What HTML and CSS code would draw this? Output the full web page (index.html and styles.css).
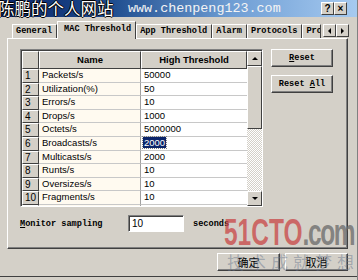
FILE: index.html
```html
<!DOCTYPE html>
<html lang="zh">
<head>
    <meta charset="UTF-8">
    <title>MAC Threshold</title>
    <link rel="stylesheet" href="styles.css">
</head>
<body>
    <div class="dialog">
        <div class="titlebar">
            <span class="title-cn">陈鹏的个人网站</span>
            <span class="title-url">www.chenpeng123.com</span>
            <span class="tb-btn">?</span>
            <span class="tb-btn close">×</span>
        </div>

        <div class="tabs">
            <span class="tab">General</span>
            <span class="tab active">MAC Threshold</span>
            <span class="tab">App Threshold</span>
            <span class="tab">Alarm</span>
            <span class="tab">Protocols</span>
            <span class="tab cut">Pro</span>
            <span class="tab-arrows">
                <span class="arrow-btn"><i class="tri left"></i></span>
                <span class="arrow-btn"><i class="tri right"></i></span>
            </span>
        </div>

        <div class="page">
            <div class="top">
                <div class="grid">
                    <div class="cells">
                        <div class="hd"></div>
                        <div class="hd">Name</div>
                        <div class="hd">High Threshold</div>

                        <div class="num">1</div><div class="name">Packets/s</div><div class="val">50000</div>
                        <div class="num">2</div><div class="name">Utilization(%)</div><div class="val">50</div>
                        <div class="num">3</div><div class="name">Errors/s</div><div class="val">10</div>
                        <div class="num">4</div><div class="name">Drops/s</div><div class="val">1000</div>
                        <div class="num">5</div><div class="name">Octets/s</div><div class="val">5000000</div>
                        <div class="num">6</div><div class="name">Broadcasts/s</div><div class="val"><span class="sel">2000</span></div>
                        <div class="num">7</div><div class="name">Multicasts/s</div><div class="val">2000</div>
                        <div class="num">8</div><div class="name">Runts/s</div><div class="val">10</div>
                        <div class="num">9</div><div class="name">Oversizes/s</div><div class="val">10</div>
                        <div class="num">10</div><div class="name">Fragments/s</div><div class="val">10</div>
                        <div class="num">11</div><div class="name">Jabbers/s</div><div class="val">10</div>
                    </div>
                    <div class="vscroll">
                        <span class="sb-btn"><i class="tri up"></i></span>
                        <span class="sb-track">
                            <span class="sb-thumb"></span>
                        </span>
                        <span class="sb-btn"><i class="tri down"></i></span>
                    </div>
                </div>

                <div class="side">
                    <button class="btn"><u>R</u>eset</button>
                    <button class="btn">Reset <u>A</u>ll</button>
                </div>
            </div>

            <div class="sampling">
                <span class="label"><u>M</u>onitor sampling</span>
                <span class="input">10</span>
                <span class="unit">seconds</span>
            </div>
        </div>

        <div class="footer">
            <button class="btn wide">确定</button>
            <button class="btn wide">取消</button>
        </div>

        <!-- watermark that sits over the screenshot -->
        <div class="mark">
            <span class="mark-red">51CTO</span><span class="mark-gray">.com</span>
        </div>
        <div class="mark-slogan">技术成就梦想</div>
    </div>
</body>
</html>
```

FILE: styles.css
```css
body {
    margin: 0;
    background: #d4d0c8;
    font-family: "Liberation Mono", monospace;
    font-size: 8.6px;
    font-weight: bold;
    color: #000;
}
.dialog {
    position: relative;
    width: 358px;
    height: 280px;
    box-sizing: border-box;
    border-right: 1px solid #808080;
    overflow: hidden;
}

/* title bar */
.titlebar {
    height: 17px;
    display: grid;
    grid-template-columns: 128px 193px 13px 13px;
    align-items: center;
    background: linear-gradient(to right, #0a246a 0%, #1c4a8c 30%, #6f9ed4 65%, #a6caf0 100%);
    color: #fff;
    font-weight: normal;
}
.title-cn {
    font-family: "Noto Sans CJK SC", sans-serif;
    font-size: 16.5px;
    line-height: 17px;
    margin-left: -2px;
    white-space: nowrap;
    text-shadow: 1px 0 #000, -1px 0 #000, 0 1px #000, 0 -1px #000;
}
.title-url {
    font-family: "Liberation Mono", monospace;
    font-size: 13.4px;
    color: #f4f4f4;
    white-space: nowrap;
}
.tb-btn {
    width: 11px;
    height: 11px;
    background: #d4d0c8;
    border: 1px solid;
    border-color: #fff #404040 #404040 #fff;
    color: #000;
    font-family: "Liberation Sans", sans-serif;
    font-weight: bold;
    font-size: 10px;
    line-height: 11px;
    text-align: center;
}

/* tabs */
.tabs {
    height: 21px;
    display: flex;
    align-items: flex-end;
    padding-left: 12px;
    position: relative;
    z-index: 1;
}
.tab {
    height: 13px;
    line-height: 13px;
    padding: 0 4px 0 3px;
    border: 1px solid;
    border-color: #fff #404040 transparent #fff;
    border-bottom: 0;
    white-space: nowrap;
}
.tab.active {
    height: 17px;
    line-height: 15px;
    background: #d4d0c8;
    padding: 0 4px 0 6px;
    margin-bottom: -1px;
}
.tab.cut {
    width: 10px;
    overflow: hidden;
}
.tab-arrows {
    display: flex;
    margin-left: 2px;
    margin-bottom: 1px;
}
.arrow-btn {
    width: 11px;
    height: 11px;
    background: #d4d0c8;
    border: 1px solid;
    border-color: #fff #404040 #404040 #fff;
    display: flex;
    align-items: center;
    justify-content: center;
}
.tri {
    width: 0;
    height: 0;
    border: 3px solid transparent;
}
.tri.left { border-right: 3px solid #000; border-left-width: 0; }
.tri.right { border-left: 3px solid #000; border-right-width: 0; }
.tri.up { border-bottom: 3px solid #000; border-width: 0 3px 3px; }
.tri.down { border-top: 3px solid #000; border-width: 3px 3px 0; }

/* tab page */
.page {
    margin-left: 7px;
    width: 341px;
    height: 211px;
    box-sizing: border-box;
    border: 1px solid;
    border-color: #fff #404040 #404040 #fff;
    box-shadow: inset -1px -1px #808080;
    padding: 10px 0 0 12px;
}
.top {
    display: flex;
    gap: 8px;
}

/* grid */
.grid {
    width: 243px;
    height: 158px;
    box-sizing: border-box;
    border: 1px solid;
    border-color: #808080 #fff #fff #808080;
    box-shadow: inset 1px 1px #404040;
    padding: 1px 0 0 1px;
    display: flex;
    overflow: hidden;
    font-family: "Liberation Sans", Arial, sans-serif;
    font-size: 9.5px;
    font-weight: normal;
}
.cells {
    display: grid;
    grid-template-columns: 17px 102px 106px;
    grid-template-rows: 18px;
    grid-auto-rows: 13.6px;
    align-content: start;
    overflow: hidden;
}
.hd, .num {
    background: #d4d0c8;
    border: 1px solid;
    border-color: #fff #404040 #404040 #fff;
    box-sizing: border-box;
}
.hd {
    font-weight: bold;
    text-align: center;
    line-height: 16px;
}
.num {
    font-size: 10px;
    padding-left: 2px;
    line-height: 11.6px;
}
.name, .val {
    border-right: 1px solid #a0a0a0;
    border-bottom: 1px solid #c8c8c8;
    box-sizing: border-box;
    padding-left: 3px;
    line-height: 12.6px;
    white-space: nowrap;
}
.name {
    background: #fffaf0;
}
.val {
    background: #fff;
    border-right: 0;
}
.sel {
    background: #0a246a;
    color: #fff;
    outline: 1px dotted #808080;
    padding: 0 1px;
    margin-left: -1px;
}
.vscroll {
    width: 15px;
    display: flex;
    flex-direction: column;
}
.sb-btn {
    height: 13px;
    background: #d4d0c8;
    border: 1px solid;
    border-color: #fff #404040 #404040 #fff;
    display: flex;
    align-items: center;
    justify-content: center;
}
.sb-track {
    flex: 1;
    background: repeating-conic-gradient(#fff 0 25%, #d4d0c8 0 50%) 0 0 / 2px 2px;
}
.sb-thumb {
    display: block;
    height: 63px;
    box-sizing: border-box;
    background: #d4d0c8;
    border: 1px solid;
    border-color: #fff #404040 #404040 #fff;
}

/* buttons */
.btn {
    font-family: "Liberation Mono", monospace;
    font-size: 8.6px;
    font-weight: bold;
    width: 62px;
    height: 18px;
    padding: 0;
    background: #d4d0c8;
    border: 1px solid;
    border-color: #fff #404040 #404040 #fff;
    box-shadow: inset -1px -1px #808080;
    color: #000;
}
.side {
    display: flex;
    flex-direction: column;
    gap: 8px;
}

/* monitor sampling */
.sampling {
    display: flex;
    align-items: center;
    margin-top: 8px;
    height: 17px;
}
.label {
    width: 108px;
}
.input {
    width: 56px;
    height: 17px;
    box-sizing: border-box;
    background: #fff;
    border: 1px solid;
    border-color: #808080 #fff #fff #808080;
    box-shadow: inset 1px 1px #404040;
    font-family: "Liberation Sans", Arial, sans-serif;
    font-size: 10px;
    font-weight: normal;
    line-height: 15px;
    padding-left: 3px;
}
.unit {
    margin-left: 9px;
}

/* footer */
.footer {
    display: flex;
    justify-content: flex-end;
    gap: 5px;
    padding: 4px 9px 0 0;
    height: 28px;
    box-sizing: border-box;
    border-bottom: 1px solid #404040;
}
.footer .btn {
    width: 63px;
    font-family: "Noto Sans CJK SC", sans-serif;
    font-size: 11px;
    font-weight: normal;
}

/* watermark */
.mark {
    position: absolute;
    left: 224px;
    top: 214px;
    font-family: "Liberation Sans", sans-serif;
    font-weight: bold;
    font-size: 36px;
    transform: scaleX(0.68);
    transform-origin: left top;
    white-space: nowrap;
    line-height: 38px;
}
.mark-red {
    color: rgba(200, 70, 70, 0.75);
}
.mark-gray {
    color: rgba(110, 110, 110, 0.8);
    letter-spacing: -2px;
}
.mark-slogan {
    position: absolute;
    left: 227px;
    top: 252px;
    font-family: "Noto Sans CJK SC", sans-serif;
    font-size: 17px;
    font-weight: normal;
    letter-spacing: 5px;
    line-height: 20px;
    color: rgba(100, 115, 140, 0.45);
    white-space: nowrap;
}
```
